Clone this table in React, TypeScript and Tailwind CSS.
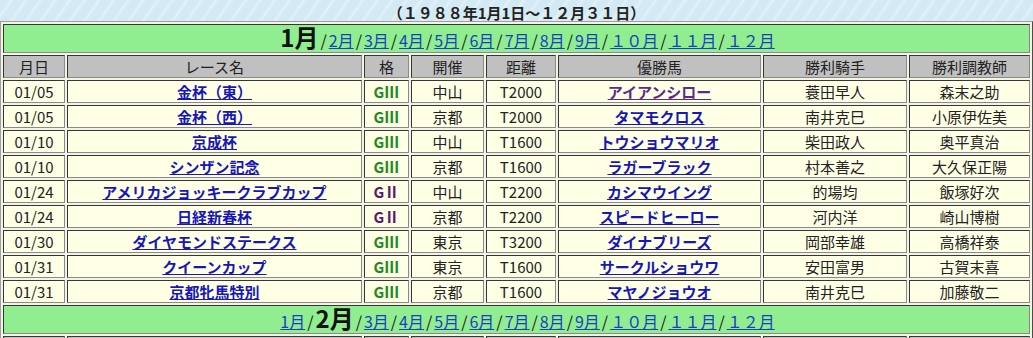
const months = ["1月", "2月", "3月", "4月", "5月", "6月", "7月", "8月", "9月", "１０月", "１１月", "１２月"];

type Race = {
  date: string;
  name: string;
  grade: "GⅡ" | "GⅢ";
  venue: string;
  dist: string;
  horse: string;
  visited?: boolean;
  jockey: string;
  trainer: string;
};

const races: Race[] = [
  { date: "01/05", name: "金杯（東）", grade: "GⅢ", venue: "中山", dist: "T2000", horse: "アイアンシロー", visited: true, jockey: "蓑田早人", trainer: "森末之助" },
  { date: "01/05", name: "金杯（西）", grade: "GⅢ", venue: "京都", dist: "T2000", horse: "タマモクロス", jockey: "南井克巳", trainer: "小原伊佐美" },
  { date: "01/10", name: "京成杯", grade: "GⅢ", venue: "中山", dist: "T1600", horse: "トウショウマリオ", jockey: "柴田政人", trainer: "奥平真治" },
  { date: "01/10", name: "シンザン記念", grade: "GⅢ", venue: "京都", dist: "T1600", horse: "ラガーブラック", jockey: "村本善之", trainer: "大久保正陽" },
  { date: "01/24", name: "アメリカジョッキークラブカップ", grade: "GⅡ", venue: "中山", dist: "T2200", horse: "カシマウイング", jockey: "的場均", trainer: "飯塚好次" },
  { date: "01/24", name: "日経新春杯", grade: "GⅡ", venue: "京都", dist: "T2200", horse: "スピードヒーロー", jockey: "河内洋", trainer: "崎山博樹" },
  { date: "01/30", name: "ダイヤモンドステークス", grade: "GⅢ", venue: "東京", dist: "T3200", horse: "ダイナブリーズ", jockey: "岡部幸雄", trainer: "高橋祥泰" },
  { date: "01/31", name: "クイーンカップ", grade: "GⅢ", venue: "東京", dist: "T1600", horse: "サークルショウワ", jockey: "安田富男", trainer: "古賀末喜" },
  { date: "01/31", name: "京都牝馬特別", grade: "GⅢ", venue: "京都", dist: "T1600", horse: "マヤノジョウオ", jockey: "南井克巳", trainer: "加藤敬二" },
];

const headers = ["月日", "レース名", "格", "開催", "距離", "優勝馬", "勝利騎手", "勝利調教師"];
const widths = ["w-[62px]", "w-[295px]", "w-[45px]", "w-[73px]", "w-[70px]", "w-[203px]", "w-[144px]", "w-[121px]"];

const cell = "border border-[#8a8a8a] [border-style:inset] p-[1px] text-center leading-[19px]";

// month navigation row, current month in big bold
const MonthRow = ({ current }: { current: number }) => (
  <tr>
    <td colSpan={8} className="border border-[#8a8a8a] [border-style:inset] h-[29px] p-0 pl-[22px] text-center bg-[#90ee90] text-[16px] leading-[20px]">
      {months.map((m, i) => (
        <span key={m}>
          {i > 0 && <span className="mx-[2px] text-[#222]">/</span>}
          {i === current ? (
            <b className="text-[24px] leading-[20px] text-[#111]">{m}</b>
          ) : (
            <a href="#" className="text-[#1a3fc0] underline">
              {m}
            </a>
          )}
        </span>
      ))}
    </td>
  </tr>
);

const HeaderRow = () => (
  <tr>
    {headers.map((h) => (
      <td key={h} className={`${cell} bg-[#c0c0c0] text-[#222]`}>
        {h}
      </td>
    ))}
  </tr>
);

export default function App() {
  return (
    <div className="h-[338px] overflow-hidden bg-[#cfe6f2] [background-image:repeating-linear-gradient(125deg,#d3e9f4_0px,#d3e9f4_7px,#e2f1f8_9px,#d3e9f4_12px)] font-['Noto_Sans_CJK_JP','Noto_Sans',sans-serif] text-[15px] text-[#222]">
      <div className="h-[21px] text-center text-[15px] font-bold leading-[25px] text-[#222]">
        （１９８８年1月1日～１２月３１日）
      </div>
      <table className="w-[1033px] table-fixed border border-[#a0a0a0] [border-style:outset] border-separate border-spacing-[2px] bg-[#f4f4e4]">
        <colgroup>
          {widths.map((w, i) => (
            <col key={i} className={w} />
          ))}
        </colgroup>
        <tbody>
          <MonthRow current={0} />
          <HeaderRow />
          {races.map((r, i) => (
            <tr key={i} className="bg-[#ffffe6]">
              <td className={cell}>{r.date}</td>
              <td className={cell}>
                <a href="#" className="font-bold text-[#1717b8] underline">
                  {r.name}
                </a>
              </td>
              <td className={`${cell} font-bold ${r.grade === "GⅢ" ? "text-[#1e8a1e]" : "text-[#5a1a6e]"}`}>
                {r.grade}
              </td>
              <td className={cell}>{r.venue}</td>
              <td className={cell}>{r.dist}</td>
              <td className={cell}>
                <a href="#" className={`font-bold underline ${r.visited ? "text-[#5b2a8a]" : "text-[#1717b8]"}`}>
                  {r.horse}
                </a>
              </td>
              <td className={cell}>{r.jockey}</td>
              <td className={cell}>{r.trainer}</td>
            </tr>
          ))}
          <MonthRow current={1} />
          <HeaderRow />
        </tbody>
      </table>
    </div>
  );
}
